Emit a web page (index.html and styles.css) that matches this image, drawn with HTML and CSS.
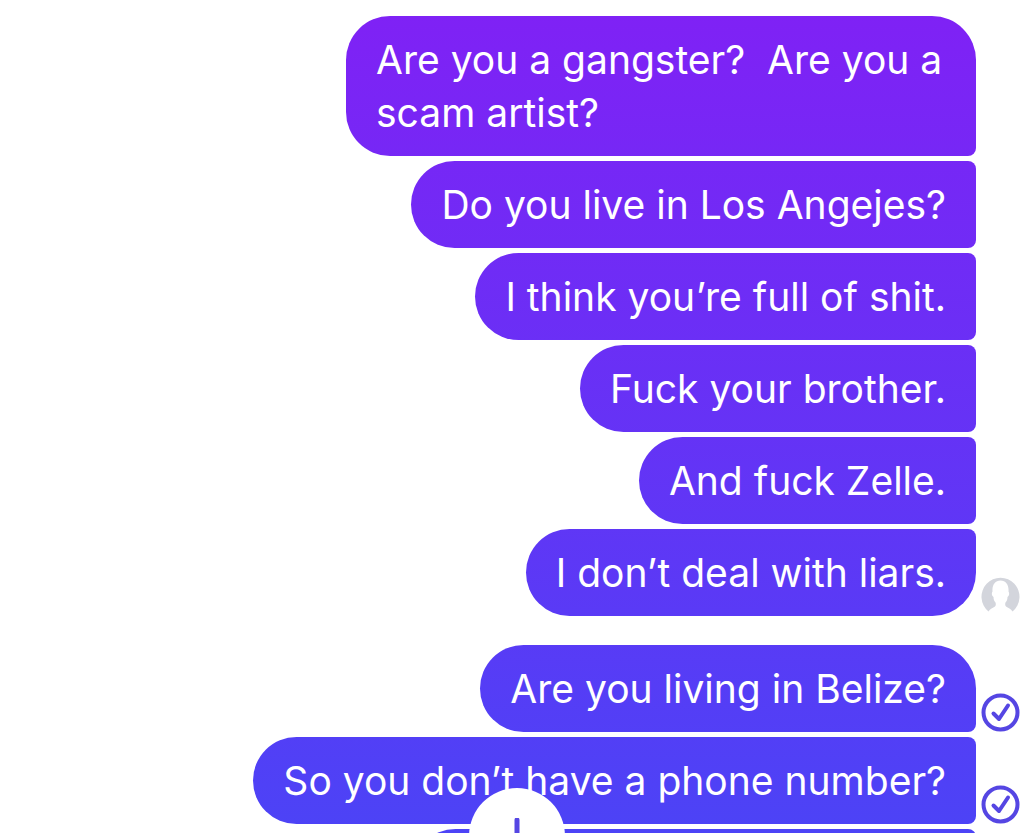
FILE: index.html
```html
<!DOCTYPE html>
<html lang="en">
<head>
    <meta charset="utf-8">
    <title>Chat</title>
    <link rel="stylesheet" href="styles.css">
</head>
<body>
    <main class="chat">
        <!-- messages already seen -->
        <section class="group">
            <div class="row"><p class="bubble wrapped">Are you a gangster?&nbsp; Are you a scam artist?</p><span class="status"></span></div>
            <div class="row"><p class="bubble">Do you live in Los Angejes?</p><span class="status"></span></div>
            <div class="row"><p class="bubble">I think you’re full of shit.</p><span class="status"></span></div>
            <div class="row"><p class="bubble">Fuck your brother.</p><span class="status"></span></div>
            <div class="row"><p class="bubble">And fuck Zelle.</p><span class="status"></span></div>
            <div class="row">
                <p class="bubble">I don’t deal with liars.</p>
                <svg class="status" viewBox="0 0 39 39" role="img" aria-label="Seen">
                    <path class="avatar" d="M7.500 34.500A19 19 0 1 1 31.500 34.500C30 31.500 27 31 25 29.500C24 28.500 24 27 24.500 25.500C26 24 26.500 22 26.500 20C28.500 18.500 28.500 16 27.500 14.500C28 8 25 3.500 19.500 3.500C14 3.500 11 8 11.500 14.500C10.500 16 10.500 18.500 12.500 20C12.500 22 13 24 14.500 25.500C15 27 15 28.500 14 29.500C12 31 9 31.500 7.500 34.500Z"/>
                </svg>
            </div>
        </section>

        <!-- delivered, not seen yet -->
        <section class="group">
            <div class="row">
                <p class="bubble">Are you living in Belize?</p>
                <svg class="status" viewBox="0 0 39 39" role="img" aria-label="Delivered">
                    <circle class="ring" cx="19.500" cy="19.500" r="17"/>
                    <path class="tick" d="M12.500 20.500L18 26L27 12.500"/>
                </svg>
            </div>
            <div class="row">
                <p class="bubble">So you don’t have a phone number?</p>
                <svg class="status" viewBox="0 0 39 39" role="img" aria-label="Delivered">
                    <circle class="ring" cx="19.500" cy="19.500" r="17"/>
                    <path class="tick" d="M12.500 20.500L18 26L27 12.500"/>
                </svg>
            </div>
            <div class="row"><p class="bubble next"></p><span class="status"></span></div>
        </section>
    </main>

    <button class="scroll-down" type="button" aria-label="Scroll to latest">
        <svg viewBox="0 0 36 36">
            <path d="M18 2V34M5 21L18 34L31 21"/>
        </svg>
    </button>
</body>
</html>
```
FILE: styles.css
```css
:root {
    --top: #8021f5;
    --bottom: #4c43f6;
    --tick: #5546e3;
}

* {
    box-sizing: border-box;
}

body {
    margin: 0;
    height: 100vh;
    overflow: hidden;
    background: #fff;
    font-family: Inter, "Liberation Sans", sans-serif;
}

.chat {
    display: flex;
    flex-direction: column;
    gap: 29px;
    height: 100%;
    overflow: hidden;
    padding: 16px 4px 0 16px;
}

.group {
    display: flex;
    flex-direction: column;
    flex: none;
    gap: 5px;
}

.row {
    display: flex;
    justify-content: flex-end;
    align-items: flex-end;
    gap: 5px;
}

/* one gradient runs through the whole window, bubbles only reveal it */
.bubble {
    margin: 0;
    padding: 17px 30px;
    max-width: 740px;
    min-height: 87px;
    border-radius: 44px 8px 8px 44px;
    background: linear-gradient(var(--top), var(--bottom)) fixed;
    color: #fff;
    font-size: 39px;
    line-height: 53px;
}

.wrapped {
    max-width: 630px;
}

.row:first-child .bubble {
    border-top-right-radius: 44px;
}

.group:first-child .row:last-child .bubble {
    border-bottom-right-radius: 44px;
}

.next {
    width: 564px;
}

.status {
    flex: none;
    width: 39px;
    height: 39px;
}

.avatar {
    fill: #d3d5dc;
}

.ring,
.tick {
    fill: none;
    stroke: var(--tick);
    stroke-width: 4;
    stroke-linecap: round;
    stroke-linejoin: round;
}

.scroll-down {
    position: fixed;
    left: calc(50% - 43px);
    bottom: -51px;
    display: flex;
    align-items: center;
    justify-content: center;
    width: 96px;
    height: 96px;
    padding: 0;
    border: 0;
    border-radius: 50%;
    background: #fff;
}

.scroll-down svg {
    width: 36px;
    height: 36px;
    fill: none;
    stroke: var(--tick);
    stroke-width: 5;
    stroke-linecap: round;
    stroke-linejoin: round;
}
```
